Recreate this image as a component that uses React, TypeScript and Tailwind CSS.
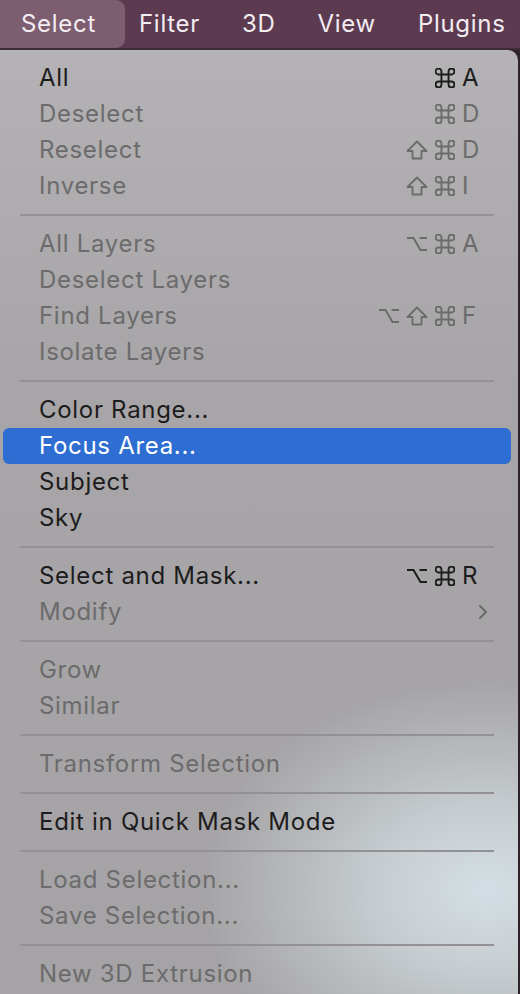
import React from "react";

type Item = {
  label: string;
  enabled?: boolean;
  active?: boolean;
  mods?: string[];
  keyChar?: string;
  submenu?: boolean;
};

const groups: Item[][] = [
  [
    { label: "All", enabled: true, mods: ["cmd"], keyChar: "A" },
    { label: "Deselect", mods: ["cmd"], keyChar: "D" },
    { label: "Reselect", mods: ["shift", "cmd"], keyChar: "D" },
    { label: "Inverse", mods: ["shift", "cmd"], keyChar: "I" },
  ],
  [
    { label: "All Layers", mods: ["opt", "cmd"], keyChar: "A" },
    { label: "Deselect Layers" },
    { label: "Find Layers", mods: ["opt", "shift", "cmd"], keyChar: "F" },
    { label: "Isolate Layers" },
  ],
  [
    { label: "Color Range...", enabled: true },
    { label: "Focus Area...", enabled: true, active: true },
    { label: "Subject", enabled: true },
    { label: "Sky", enabled: true },
  ],
  [
    { label: "Select and Mask...", enabled: true, mods: ["opt", "cmd"], keyChar: "R" },
    { label: "Modify", submenu: true },
  ],
  [{ label: "Grow" }, { label: "Similar" }],
  [{ label: "Transform Selection" }],
  [{ label: "Edit in Quick Mask Mode", enabled: true }],
  [{ label: "Load Selection..." }, { label: "Save Selection..." }],
  [{ label: "New 3D Extrusion" }],
];

// keyboard modifier symbols
const ModIcon = ({ name }: { name: string }) => {
  if (name === "cmd")
    return (
      <svg width="20" height="20" viewBox="1.5 1.5 17 17">
        <path
          d="M7 4.5 A2.5 2.5 0 1 0 4.5 7 H15.5 A2.5 2.5 0 1 0 13 4.5 V15.5 A2.5 2.5 0 1 0 15.5 13 H4.5 A2.5 2.5 0 1 0 7 15.5 Z"
          fill="none"
          stroke="currentColor"
          strokeWidth="1.6"
        />
      </svg>
    );
  if (name === "shift")
    return (
      <svg width="22" height="20" viewBox="0 0 22 20">
        <path
          d="M11 1.5 L20.5 11 H15.5 V18.5 H6.5 V11 H1.5 Z"
          fill="none"
          stroke="currentColor"
          strokeWidth="1.8"
          strokeLinejoin="round"
        />
      </svg>
    );
  return (
    <svg width="22" height="20" viewBox="0 0 22 20">
      <path
        d="M1 4 H7.5 L14.5 16 H21 M13.5 4 H21"
        fill="none"
        stroke="currentColor"
        strokeWidth="2"
      />
    </svg>
  );
};

const MenuRow = ({ item }: { item: Item }) => {
  const color = item.active
    ? "text-white"
    : item.enabled
    ? "text-[#1d1c1d]"
    : "text-[#6c6b6c]";
  return (
    <div
      className={`flex h-[36px] items-center rounded-[6px] pl-[36px] pr-[30px] ${color} ${
        item.active ? "bg-[#2e6dd1]" : ""
      }`}
    >
      <span className="flex-1 whitespace-nowrap">{item.label}</span>
      {item.keyChar && (
        <span className="flex items-center">
          {item.mods?.map((m, i) => (
            <span key={i} className="flex w-[28px] justify-center">
              <ModIcon name={m} />
            </span>
          ))}
          <span className="w-[22px] pl-[3px] leading-none tracking-normal">{item.keyChar}</span>
        </span>
      )}
      {item.submenu && (
        <svg width="10" height="16" viewBox="0 0 10 16" className="mr-[-7px]">
          <path
            d="M2 2 L8 8 L2 14"
            fill="none"
            stroke="#6c6b6c"
            strokeWidth="2"
            strokeLinecap="round"
            strokeLinejoin="round"
          />
        </svg>
      )}
    </div>
  );
};

export default function App() {
  return (
    <div className="h-[994px] w-[520px] overflow-hidden bg-[#2c2228] font-['Inter',sans-serif] text-[24px] tracking-[0.7px]">
      <div className="flex h-[48px] items-center bg-[#5c3b51] text-[#f3ecf1]">
        <div className="flex h-full w-[125px] items-center rounded-r-[9px] bg-[#7d5e71] pl-[21px]">
          Select
        </div>
        <div className="ml-[14px] flex gap-[42px]">
          <span>Filter</span>
          <span>3D</span>
          <span>View</span>
          <span>Plugins</span>
        </div>
      </div>
      <div className="h-[2px] bg-[#3d2b36]" />
      <div className="mr-[2px] h-[944px] rounded-tr-[10px] bg-[image:radial-gradient(ellipse_55%_22%_at_94%_89%,#d4dee4_0%,#c8cfd3_35%,rgba(166,164,166,0)_100%),linear-gradient(to_bottom,#b4b2b4_0%,#a7a5a7_35%,#a5a3a5_100%)] pl-[3px] pr-[7px] pt-[10px]">
        {groups.map((g, gi) => (
          <div key={gi}>
            {gi > 0 && (
              <div className="flex h-[22px] items-center px-[17px]">
                <div className="h-[2px] w-full bg-[#939193]" />
              </div>
            )}
            {g.map((item) => (
              <MenuRow key={item.label} item={item} />
            ))}
          </div>
        ))}
      </div>
    </div>
  );
}
